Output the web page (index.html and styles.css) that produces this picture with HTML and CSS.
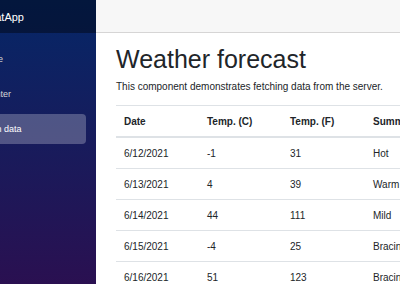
FILE: index.html
```html
<!DOCTYPE html>
<html lang="en">
<head>
  <meta charset="UTF-8">
  <meta name="viewport" content="width=device-width, initial-scale=1.0">
  <title>Weather forecast</title>
  <link rel="stylesheet" href="styles.css">
</head>
<body>
  <div class="page">
    <div class="sidebar">
      <div class="sidebar-inner">
        <div class="brand-row">
          <a class="brand" href="#">BlazorChatApp</a>
        </div>
        <nav class="nav">
          <div class="nav-item"><a class="nav-link" href="#">Home</a></div>
          <div class="nav-item"><a class="nav-link" href="#">Counter</a></div>
          <div class="nav-item"><a class="nav-link active" href="#">Fetch data</a></div>
        </nav>
      </div>
    </div>

    <div class="main">
      <div class="top-row"></div>
      <div class="content">
        <h1>Weather forecast</h1>
        <p>This component demonstrates fetching data from the server.</p>
        <table class="table">
          <thead>
            <tr>
              <th>Date</th>
              <th>Temp. (C)</th>
              <th>Temp. (F)</th>
              <th>Summary</th>
            </tr>
          </thead>
          <tbody>
            <tr><td>6/12/2021</td><td>-1</td><td>31</td><td>Hot</td></tr>
            <tr><td>6/13/2021</td><td>4</td><td>39</td><td>Warm</td></tr>
            <tr><td>6/14/2021</td><td>44</td><td>111</td><td>Mild</td></tr>
            <tr><td>6/15/2021</td><td>-4</td><td>25</td><td>Bracing</td></tr>
            <tr><td>6/16/2021</td><td>51</td><td>123</td><td>Bracing</td></tr>
          </tbody>
        </table>
      </div>
    </div>
  </div>
</body>
</html>
```

FILE: styles.css
```css
html, body {
  margin: 0;
  height: 100%;
  overflow: hidden;
}
body {
  font-family: 'Liberation Sans', Arial, sans-serif;
  color: #212529;
  background: white;
}
.page {
  display: flex;
  height: 100%;
}
.sidebar {
  width: 96px;
  flex-shrink: 0;
  overflow: hidden;
  background-image: linear-gradient(180deg, rgb(5, 39, 103) 0%, rgb(42, 16, 81) 100%);
}
.sidebar-inner {
  width: 156px;
  margin-left: -60px;
}
.brand-row {
  height: 33px;
  display: flex;
  align-items: center;
  background-color: rgba(0, 0, 0, 0.4);
  padding-left: 10px;
}
.brand {
  color: white;
  font-size: 11px;
  text-decoration: none;
}
.nav {
  display: flex;
  flex-direction: column;
  padding-top: 11px;
}
.nav-item {
  padding: 0 10px 5px;
}
.nav-link {
  display: flex;
  align-items: center;
  height: 30px;
  padding-left: 29px;
  border-radius: 4px;
  color: #d7d7d7;
  font-size: 9px;
  text-decoration: none;
}
.nav-link.active {
  background-color: rgba(255, 255, 255, 0.25);
  color: white;
}
.main {
  flex: 1;
  min-width: 0;
  overflow: hidden;
}
.top-row {
  height: 32px;
  background-color: #f7f7f7;
  border-bottom: 1px solid #d6d5d5;
}
.content {
  padding: 11px 0 0 20px;
}
h1 {
  font-size: 25px;
  font-weight: 500;
  line-height: 30px;
  margin: 0 0 5px;
}
p {
  font-size: 10px;
  line-height: 15px;
  margin: 0 0 11px;
}
.table {
  border-collapse: collapse;
  table-layout: fixed;
  width: 420px;
  font-size: 10px;
  line-height: 15px;
}
.table th,
.table td {
  padding: 7.5px 8px;
  text-align: left;
  border-top: 1px solid #dee2e6;
  white-space: nowrap;
}
.table th:not(:last-child) {
  width: 67px;
}
.table th {
  font-weight: bold;
}
.table thead th {
  border-bottom: 2px solid #dee2e6;
}
```
